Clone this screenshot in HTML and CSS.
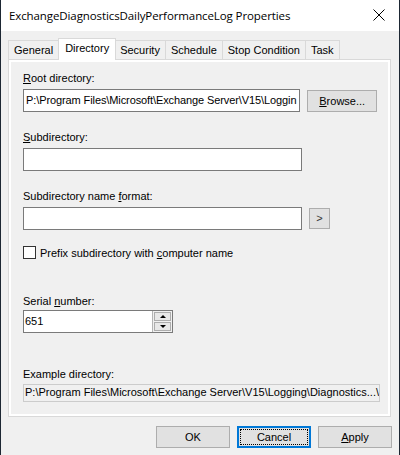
FILE: index.html
```html
<!DOCTYPE html>
<html lang="en">
<head>
    <meta charset="UTF-8">
    <title>ExchangeDiagnosticsDailyPerformanceLog Properties</title>
    <link rel="stylesheet" href="styles.css">
</head>
<body>
    <div class="window">
        <div class="titlebar">
            <span class="title">ExchangeDiagnosticsDailyPerformanceLog Properties</span>
            <svg class="close" width="12" height="12" viewBox="0 0 12 12">
                <path d="M0.5 0.5 L11.5 11.5 M11.5 0.5 L0.5 11.5" stroke="#000" stroke-width="1" fill="none"/>
            </svg>
        </div>

        <div class="tabs">
            <div class="tab">General</div>
            <div class="tab active">Directory</div>
            <div class="tab">Security</div>
            <div class="tab">Schedule</div>
            <div class="tab">Stop Condition</div>
            <div class="tab">Task</div>
        </div>

        <div class="panel">
            <div class="label"><u>R</u>oot directory:</div>
            <div class="row">
                <div class="field wide">P:\Program Files\Microsoft\Exchange Server\V15\Loggin</div>
                <div class="button browse"><u>B</u>rowse...</div>
            </div>

            <div class="label gap"><u>S</u>ubdirectory:</div>
            <div class="row">
                <div class="field wide"></div>
            </div>

            <div class="label gap">Subdirectory name <u>f</u>ormat:</div>
            <div class="row">
                <div class="field wide"></div>
                <div class="button arrow">&gt;</div>
            </div>

            <div class="check-row">
                <span class="checkbox"></span>
                <span>Prefix subdirectory with <u>c</u>omputer name</span>
            </div>

            <div class="label serial-label">Serial <u>n</u>umber:</div>
            <div class="spin">
                <div class="spin-value">651</div>
                <div class="spin-buttons">
                    <div class="spin-btn"><span class="tri up"></span></div>
                    <div class="spin-btn"><span class="tri down"></span></div>
                </div>
            </div>

            <div class="label example-label">Example directory:</div>
            <div class="field readonly">P:\Program Files\Microsoft\Exchange Server\V15\Logging\Diagnostics...\</div>
        </div>

        <div class="footer">
            <div class="button dlg">OK</div>
            <div class="button dlg focused"><span class="focus-ring">Cancel</span></div>
            <div class="button dlg"><u>A</u>pply</div>
        </div>
    </div>
</body>
</html>
```

FILE: styles.css
```css
body {
    margin: 0;
    background: #f0f0f0;
    font-family: "Liberation Sans", Arial, sans-serif;
    font-size: 11px;
    color: #000;
}
.window {
    width: 400px;
    height: 455px;
    box-sizing: border-box;
    border-left: 1px solid #1d2733;
    border-right: 1px solid #1d2733;
    background: #f0f0f0;
}
.titlebar {
    height: 31px;
    background: #fff;
    display: flex;
    align-items: center;
    justify-content: space-between;
    padding: 0 14px 0 8px;
}
.title {
    font-family: "Open Sans", "Noto Sans", sans-serif;
    font-size: 11.5px;
    letter-spacing: -0.1px;
    margin-top: -1px;
}
.close {
    margin-top: -1px;
}
.tabs {
    display: flex;
    align-items: flex-end;
    margin: 7px 0 0 7px;
    height: 21px;
}
.tab {
    height: 18px;
    line-height: 18px;
    padding: 0 5px;
    border: 1px solid #d9d9d9;
    border-bottom: none;
    border-left: none;
    background: #f0f0f0;
}
.tab:first-child {
    border-left: 1px solid #d9d9d9;
}
.tab.active {
    height: 21px;
    line-height: 18px;
    background: #fff;
    border-left: 1px solid #d9d9d9;
    margin: 0 -1px -1px -1px;
    padding: 0 6px;
    position: relative;
    z-index: 1;
}
.panel {
    margin: 0 8px 0 7px;
    height: 358px;
    box-sizing: border-box;
    border: 1px solid #d9d9d9;
    box-shadow: inset 0 0 0 2px #fff;
    padding: 12px 13px 0 14px;
}
.label {
    height: 13px;
    line-height: 13px;
    margin-bottom: 4px;
}
.label.gap {
    margin-top: 19px;
}
.row {
    display: flex;
    align-items: center;
    gap: 7px;
}
.field {
    height: 23px;
    box-sizing: border-box;
    border: 1px solid #7a7a7a;
    background: #fff;
    line-height: 20px;
    padding: 0 2px;
    white-space: nowrap;
    overflow: hidden;
}
.field.wide {
    width: 279px;
    letter-spacing: -0.1px;
}
.button {
    box-sizing: border-box;
    border: 1px solid #adadad;
    background: #e1e1e1;
    display: flex;
    align-items: center;
    justify-content: center;
}
.browse {
    width: 70px;
    height: 22px;
}
.arrow {
    width: 21px;
    height: 21px;
    color: #333;
    margin-top: -1px;
}
.check-row {
    display: flex;
    align-items: center;
    gap: 4px;
    margin-top: 16px;
    height: 13px;
}
.checkbox {
    width: 13px;
    height: 13px;
    box-sizing: border-box;
    border: 1px solid #333;
    background: #fff;
}
.serial-label {
    margin-top: 36px;
    margin-bottom: 2px;
}
.spin {
    display: flex;
    width: 150px;
    height: 23px;
    box-sizing: border-box;
    border: 1px solid #7a7a7a;
    background: #fff;
}
.spin-value {
    flex: 1;
    line-height: 20px;
    padding-left: 1px;
}
.spin-buttons {
    width: 17px;
    display: flex;
    flex-direction: column;
    gap: 1px;
    padding: 1px;
    background: #f0f0f0;
    border-left: 1px solid #b4b4b4;
}
.spin-btn {
    flex: 1;
    border: 1px solid #adadad;
    background: #e8e8e8;
    display: flex;
    align-items: center;
    justify-content: center;
}
.tri {
    width: 0;
    height: 0;
    border-left: 3px solid transparent;
    border-right: 3px solid transparent;
}
.tri.up {
    border-bottom: 3px solid #000;
}
.tri.down {
    border-top: 3px solid #000;
}
.example-label {
    margin-top: 35px;
    margin-bottom: 3px;
}
.field.readonly {
    width: 357px;
    height: 18px;
    line-height: 15px;
    background: #f0f0f0;
    border-color: #cccccc;
    padding-left: 1px;
}
.footer {
    display: flex;
    justify-content: flex-end;
    gap: 7px;
    margin-top: 9px;
    padding-right: 7px;
}
.dlg {
    width: 74px;
    height: 22px;
}
.dlg.focused {
    border: 1px solid #0078d7;
    box-shadow: inset 0 0 0 1px #0078d7;
    padding: 2px;
}
.focus-ring {
    flex: 1;
    align-self: stretch;
    display: flex;
    align-items: center;
    justify-content: center;
    border: 1px dotted #000;
}
```
